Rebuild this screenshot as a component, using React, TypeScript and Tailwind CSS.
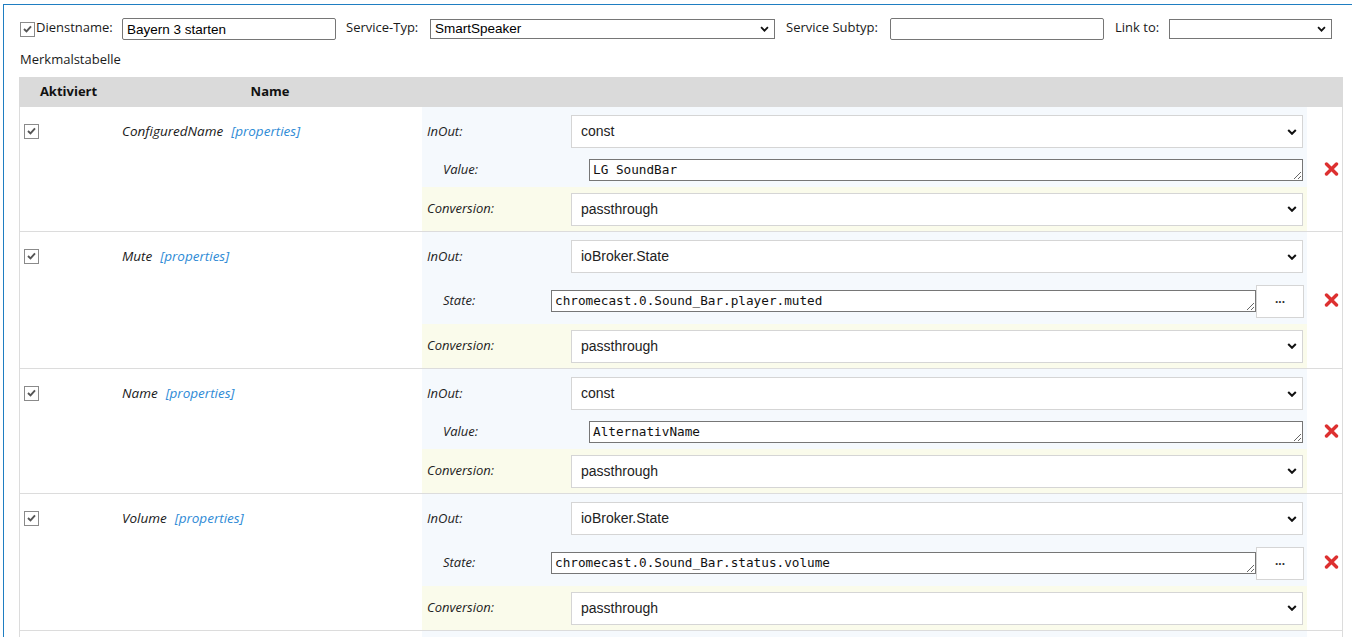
import React from "react";

function Check() {
  return (
    <span className="inline-flex h-[15px] w-[15px] shrink-0 items-center justify-center border border-[#8a8a8a] bg-white">
      <svg width="9" height="8" viewBox="0 0 9 8">
        <path d="M1 4 L3.5 6.4 L8 1.4" fill="none" stroke="#555555" strokeWidth="1.9" />
      </svg>
    </span>
  );
}

function Chevron({ w = 10, h = 6 }: { w?: number; h?: number }) {
  return (
    <svg width={w} height={h} viewBox="0 0 10 6" className="shrink-0">
      <path d="M1.2 1 L5 4.8 L8.8 1" fill="none" stroke="#111111" strokeWidth="2" />
    </svg>
  );
}

function BigSelect({ value }: { value: string }) {
  return (
    <div className="mr-[4px] flex h-[33px] flex-1 items-center justify-between border border-[#d5d5d5] bg-white pl-[9px] pr-[5px] font-['Liberation_Sans',Arial,sans-serif] text-[14px] not-italic text-[#222222]">
      <span>{value}</span>
      <Chevron />
    </div>
  );
}

function RedX() {
  return (
    <svg width="15" height="14" viewBox="0 0 15 14">
      <path d="M2.5 2 L12.5 12 M12.5 2 L2.5 12" fill="none" stroke="#dd3030" strokeWidth="3.4" strokeLinecap="round" />
    </svg>
  );
}

type RowProps = {
  name: string;
  inout: string;
  kind: "value" | "state";
  value: string;
};

function Row({ name, inout, kind, value }: RowProps) {
  return (
    <div className="flex border-b border-l border-r border-[#dcdcdc] bg-white">
      <div className="w-[98px] shrink-0 pl-[4px] pt-[14px]">
        <Check />
      </div>
      <div className="w-[304px] shrink-0 pl-[4px] pt-[15px] text-[13.5px] italic leading-[18px] text-[#1a1a1a]">
        <span>{name}</span>
        <span className="ml-[8px] text-[#2f8bd6]">[properties]</span>
      </div>
      <div className="flex w-[885px] shrink-0 flex-col text-[13px] italic text-[#222222]">
        <div className="flex h-[46px] items-center bg-[#f5f9fd] pb-[5px] pt-[8px]">
          <div className="w-[149px] shrink-0 pl-[5px]">InOut:</div>
          <BigSelect value={inout} />
        </div>
        {kind === "value" ? (
          <div className="flex h-[34px] items-center bg-[#f5f9fd]">
            <div className="w-[167px] shrink-0 pl-[21px]">Value:</div>
            <textarea
              readOnly
              rows={1}
              defaultValue={value}
              className="mr-[4px] h-[22px] flex-1 border border-[#767676] bg-white px-[3px] py-[1px] font-['DejaVu_Sans_Mono',monospace] text-[12.7px] not-italic leading-[18px] text-[#111111]"
            />
          </div>
        ) : (
          <div className="flex h-[46px] items-center bg-[#f5f9fd]">
            <div className="w-[129px] shrink-0 pl-[21px]">State:</div>
            <textarea
              readOnly
              rows={1}
              defaultValue={value}
              className="h-[22px] flex-1 border border-[#767676] bg-white px-[3px] py-[1px] font-['DejaVu_Sans_Mono',monospace] text-[12.7px] not-italic leading-[18px] text-[#111111]"
            />
            <div className="mr-[3px] flex h-[33px] w-[48px] shrink-0 items-center justify-center border border-[#d5d5d5] bg-white pb-[4px] font-['Liberation_Sans',Arial,sans-serif] text-[12px] font-bold not-italic text-[#333333]">
              ...
            </div>
          </div>
        )}
        <div className="flex h-[44px] items-center bg-[#fafbeb]">
          <div className="w-[149px] shrink-0 pl-[5px]">Conversion:</div>
          <BigSelect value="passthrough" />
        </div>
      </div>
      <div className="flex w-[35px] shrink-0 items-center justify-end pr-[3px]">
        <RedX />
      </div>
    </div>
  );
}

export default function App() {
  const rows: RowProps[] = [
    { name: "ConfiguredName", inout: "const", kind: "value", value: "LG SoundBar" },
    { name: "Mute", inout: "ioBroker.State", kind: "state", value: "chromecast.0.Sound_Bar.player.muted" },
    { name: "Name", inout: "const", kind: "value", value: "AlternativName" },
    { name: "Volume", inout: "ioBroker.State", kind: "state", value: "chromecast.0.Sound_Bar.status.volume" },
  ];
  return (
    <div className="h-[637px] w-[1352px] overflow-hidden bg-white pl-[3px] pt-[4px] font-['Open_Sans',sans-serif] text-[13px] text-[#1a1a1a]">
      <div className="h-full border-l border-t border-[#1f7ec2] pl-[16px] pt-[13px]">
        <div className="flex h-[22px] items-center">
          <Check />
          <span className="mb-[3px] ml-[1px] w-[86px] shrink-0">Dienstname:</span>
          <input
            readOnly
            defaultValue="Bayern 3 starten"
            className="h-[22px] w-[214px] shrink-0 rounded-[2px] border border-[#767676] bg-white px-[4px] font-['Liberation_Sans',Arial,sans-serif] text-[13.5px] text-black"
          />
          <span className="mb-[3px] ml-[10px] w-[84px] shrink-0">Service-Typ:</span>
          <div className="flex h-[20px] w-[345px] shrink-0 items-center justify-between border border-[#767676] bg-white pl-[4px] pr-[5px] font-['Liberation_Sans',Arial,sans-serif] text-[13.5px] text-black">
            <span>SmartSpeaker</span>
            <Chevron w={9} h={6} />
          </div>
          <span className="mb-[3px] ml-[11px] w-[104px] shrink-0">Service Subtyp:</span>
          <input
            readOnly
            defaultValue=""
            className="h-[22px] w-[214px] shrink-0 rounded-[2px] border border-[#767676] bg-white px-[4px] font-['Liberation_Sans',Arial,sans-serif] text-[13.5px] text-black"
          />
          <span className="mb-[3px] ml-[11px] w-[54px] shrink-0">Link to:</span>
          <div className="flex h-[20px] w-[163px] shrink-0 items-center justify-end border border-[#767676] bg-white pr-[5px]">
            <Chevron w={9} h={6} />
          </div>
        </div>
        <div className="mt-[10px] h-[18px] leading-[18px]">Merkmalstabelle</div>
        <div className="-ml-[1px] mt-[9px] w-[1324px]">
          <div className="flex h-[30px] items-center bg-[#dadada] font-bold text-[#111111]">
            <div className="w-[99px] shrink-0 text-center">Aktiviert</div>
            <div className="w-[304px] shrink-0 text-center">Name</div>
          </div>
          {rows.map((r) => (
            <Row key={r.name} {...r} />
          ))}
          <div className="flex h-[20px] border-l border-r border-[#dcdcdc] bg-white">
            <div className="w-[402px] shrink-0" />
            <div className="w-[885px] shrink-0 bg-[#f5f9fd]" />
          </div>
        </div>
      </div>
    </div>
  );
}
